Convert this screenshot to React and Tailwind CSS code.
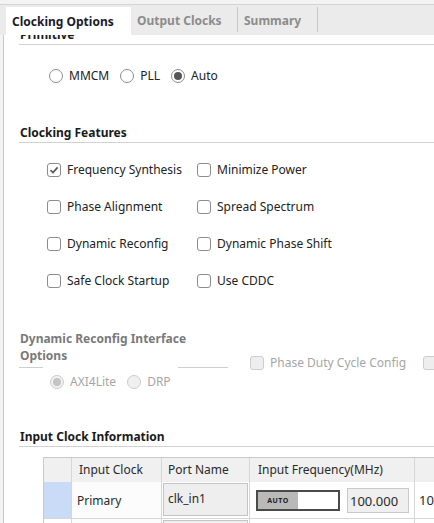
import React from 'react';

const font = { fontFamily: '"Noto Sans", "Open Sans", sans-serif' };

function Radio({ label, checked, disabled }) {
  return (
    <div className="flex items-center gap-[6px] h-[18px]">
      <span
        className={`flex items-center justify-center w-[14px] h-[14px] rounded-full border ${
          disabled ? 'border-[#cdcdcd] bg-[#f0f0f0]' : 'border-[#8c8c8c] bg-white'
        }`}
      >
        {checked && (
          <span className={`w-[8px] h-[8px] rounded-full ${disabled ? 'bg-[#c4c4c4]' : 'bg-[#555555]'}`} />
        )}
      </span>
      <span className={disabled ? 'text-[#a6a6a6]' : 'text-[#222]'}>{label}</span>
    </div>
  );
}

function Check({ label, checked, disabled }) {
  return (
    <div className="flex items-center gap-[6px] h-[18px] whitespace-nowrap">
      <span
        className={`flex items-center justify-center w-[14px] h-[14px] rounded-[3px] border ${
          disabled ? 'border-[#cdcdcd] bg-[#eeeeee]' : 'border-[#8c8c8c] bg-white'
        }`}
      >
        {checked && (
          <svg width="12" height="12" viewBox="0 0 12 12">
            <path d="M2.5 6.2 L5 8.6 L9.6 3.4" fill="none" stroke="#555" strokeWidth="1.6" />
          </svg>
        )}
      </span>
      <span className={disabled ? 'text-[#a6a6a6]' : 'text-[#222]'}>{label}</span>
    </div>
  );
}

function Heading({ children }) {
  return (
    <div className="ml-[15px] pl-[1px] h-[20px] pb-[2px] leading-[20px] border-b border-[#d2d2d2] font-bold text-[#1a1a1a]">
      {children}
    </div>
  );
}

export default function App() {
  return (
    <div style={font} className="w-[434px] h-[523px] overflow-hidden flex flex-col bg-[#f3f3f3] text-[12px]">
      <div className="h-[4px] shrink-0" />
      {/* Tabs */}
      <div className="flex shrink-0 h-[31px] border-t border-[#d4d4d4] bg-[#ebebeb] pl-[6px] pt-[2px] font-bold">
        <div className="w-[125px] bg-white pl-[6px] leading-[30px] text-[#1a1a2a]">Clocking Options</div>
        <div className="w-[106px] pl-[6px] leading-[28px] text-[#8c8c8c]">Output Clocks</div>
        <div className="w-px h-[25px] bg-[#c8c8c8]" />
        <div className="w-[79px] pl-[6px] leading-[28px] text-[#8c8c8c]">Summary</div>
        <div className="w-px h-[25px] bg-[#c8c8c8]" />
      </div>

      {/* Content */}
      <div className="flex-1 ml-[3px] border-l border-[#c8c8c8] bg-white overflow-hidden">
        <div className="mt-[-10px]">
          <Heading>Primitive</Heading>
        </div>

        <div className="mt-[22px] pl-[45px] flex gap-[11px] leading-[20px]">
          <Radio label="MMCM" />
          <Radio label="PLL" />
          <Radio label="Auto" checked />
        </div>

        <div className="mt-[38px]">
          <Heading>Clocking Features</Heading>
        </div>

        <div className="mt-[18px] pl-[43px] grid grid-cols-[150px_150px] gap-y-[19px] leading-[20px]">
          <Check label="Frequency Synthesis" checked />
          <Check label="Minimize Power" />
          <Check label="Phase Alignment" />
          <Check label="Spread Spectrum" />
          <Check label="Dynamic Reconfig" />
          <Check label="Dynamic Phase Shift" />
          <Check label="Safe Clock Startup" />
          <Check label="Use CDDC" />
        </div>

        {/* Dynamic reconfig interface options */}
        <div className="mt-[40px] flex">
          <div className="w-[246px] shrink-0">
            <div className="ml-[16px] w-[180px] font-bold text-[#7a7a7a] leading-[17px]">
              Dynamic Reconfig Interface Options
            </div>
            <div className="flex mt-[3px] ml-[15px]">
              <div className="w-[24px] h-px bg-[#cfcfcf]" />
              <div className="w-[50px] h-px bg-[#cfcfcf] ml-[135px]" />
            </div>
            <div className="mt-[5px] pl-[46px] flex gap-[11px] leading-[20px]">
              <Radio label="AXI4Lite" checked disabled />
              <Radio label="DRP" disabled />
            </div>
          </div>
          <div className="flex gap-[17px] pt-[24px] shrink-0 leading-[20px]">
            <Check label="Phase Duty Cycle Config" disabled />
            <Check label="" disabled />
          </div>
        </div>

        <div className="mt-[36px]">
          <Heading>Input Clock Information</Heading>
        </div>

        {/* Table */}
        <div className="mt-[10px] ml-[39px] w-[500px] border-l border-t border-[#c9c9c9] text-[#2a2a2a]">
          <div className="grid grid-cols-[28px_90px_88px_165px_1fr] h-[24px] bg-[#f0f0f0] leading-[24px]">
            <div className="border-r border-b border-[#d6d6d6]" />
            <div className="border-r border-b border-[#d6d6d6] pl-[7px]">Input Clock</div>
            <div className="border-r border-b border-[#d6d6d6] pl-[6px]">Port Name</div>
            <div className="border-r border-b border-[#d6d6d6] pl-[8px]">Input Frequency(MHz)</div>
            <div className="border-b border-[#d6d6d6]" />
          </div>
          <div className="grid grid-cols-[28px_90px_88px_165px_1fr] h-[37px]">
            <div className="bg-[#c9dbf7] border-r border-b border-[#d6d6d6]" />
            <div className="bg-[#fcfcfc] border-r border-b border-[#d6d6d6] pl-[5px] pt-[2px] flex items-center">Primary</div>
            <div className="bg-white border-r border-b border-[#d6d6d6] p-[1px]">
              <div className="h-[33px] bg-[#eeeeee] border border-[#c4c4c4] pl-[4px] leading-[30px]">clk_in1</div>
            </div>
            <div className="bg-white border-r border-b border-[#d6d6d6] flex items-center pl-[6px] gap-[7px]">
              <div className="flex w-[84px] h-[21px] border-2 border-[#4a4a4a] bg-white">
                <div className="w-[40px] bg-[#b9b9b9] flex items-center justify-center text-[7px] font-bold tracking-[0.5px] text-[#222] leading-none">
                  AUTO
                </div>
              </div>
              <div className="w-[62px] h-[25px] bg-[#efefef] border border-[#cacaca] pl-[2px] leading-[25px] text-[13px]">100.000</div>
            </div>
            <div className="bg-white border-b border-[#d6d6d6] pl-[4px] pt-[2px] flex items-center text-[13px]">100.000</div>
          </div>
          <div className="grid grid-cols-[28px_90px_88px_165px_1fr] h-[20px]">
            <div className="border-r border-[#d6d6d6]" />
            <div className="bg-[#fcfcfc] border-r border-[#d6d6d6]" />
            <div className="bg-white border-r border-[#d6d6d6] p-[1px]">
              <div className="h-[20px] bg-[#eeeeee] border border-[#c4c4c4]" />
            </div>
            <div className="bg-white border-r border-[#d6d6d6]" />
            <div className="bg-white" />
          </div>
        </div>
      </div>
    </div>
  );
}
